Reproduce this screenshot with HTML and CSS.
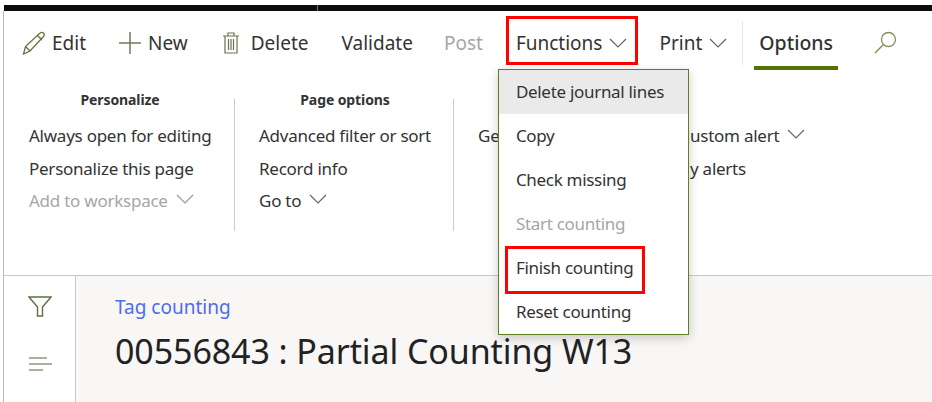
FILE: index.html
```html
<!DOCTYPE html>
<html lang="en">
<head>
    <meta charset="UTF-8">
    <title>Tag counting</title>
    <link rel="stylesheet" href="styles.css">
</head>
<body>
    <div class="topbar"><span class="seg-a"></span><span class="seg-b"></span></div>

    <div class="toolbar">
        <div class="tool">
            <svg class="icon" width="24" height="24" viewBox="0 0 24 24"><path d="M1.500 23l2-7.500L17.500 2.500c1.500-1.500 3-1.500 4-.5s1 2.500-.5 4L8 20zM3.500 15.500l4.500 4.500M15.500 4.500l4.500 4.500" fill="none" stroke="#6b7040" stroke-width="1.300"/></svg>
            Edit
        </div>
        <div class="tool new">
            <svg class="icon" width="24" height="24" viewBox="0 0 24 24"><path d="M12 1v22M1 12h22" fill="none" stroke="#77775a" stroke-width="1.500"/></svg>
            New
        </div>
        <div class="tool">
            <svg class="icon trash" width="18" height="24" viewBox="0 0 18 24"><path d="M1 5h16M6 5V2h6v3M3 5v17h12V5M6.500 8v11M9 8v11M11.500 8v11" fill="none" stroke="#6b7050" stroke-width="1.200"/></svg>
            Delete
        </div>
        <div class="tool">Validate</div>
        <div class="tool off post">Post</div>
        <div class="tool functions">
            Functions
            <svg class="chev" width="18" height="10" viewBox="0 0 18 10"><path d="M1 1l8 8 8-8" fill="none" stroke="#666" stroke-width="1.200"/></svg>
            <div class="menu">
                <div class="menu-item hover">Delete journal lines</div>
                <div class="menu-item">Copy</div>
                <div class="menu-item">Check missing</div>
                <div class="menu-item off">Start counting</div>
                <div class="menu-item"><span class="marked">Finish counting</span></div>
                <div class="menu-item">Reset counting</div>
            </div>
        </div>
        <div class="tool print">
            Print
            <svg class="chev" width="18" height="10" viewBox="0 0 18 10"><path d="M1 1l8 8 8-8" fill="none" stroke="#666" stroke-width="1.200"/></svg>
        </div>
        <div class="tool-sep"></div>
        <div class="tab">Options</div>
        <svg class="search" width="23" height="23" viewBox="0 0 23 23"><circle cx="14.500" cy="8.500" r="7" fill="none" stroke="#8a8a60" stroke-width="1.300"/><path d="M9.500 13.500L1 22" fill="none" stroke="#8a8a50" stroke-width="1.500"/></svg>
    </div>

    <div class="ribbon">
        <div class="group g1">
            <div class="group-head">Personalize</div>
            <div class="link">Always open for editing</div>
            <div class="link">Personalize this page</div>
            <div class="link off">Add to workspace <svg class="chev" width="18" height="10" viewBox="0 0 18 10"><path d="M1 1l8 8 8-8" fill="none" stroke="#999" stroke-width="1.200"/></svg></div>
        </div>
        <div class="group-sep"></div>
        <div class="group g2">
            <div class="group-head">Page options</div>
            <div class="link">Advanced filter or sort</div>
            <div class="link">Record info</div>
            <div class="link">Go to <svg class="chev" width="18" height="10" viewBox="0 0 18 10"><path d="M1 1l8 8 8-8" fill="none" stroke="#666" stroke-width="1.200"/></svg></div>
        </div>
        <div class="group-sep"></div>
        <div class="group g3">
            <div class="group-head">&nbsp;</div>
            <div class="link">Ge</div>
        </div>
        <div class="group g4">
            <div class="group-head">&nbsp;</div>
            <div class="link">ustom alert <svg class="chev" width="18" height="10" viewBox="0 0 18 10"><path d="M1 1l8 8 8-8" fill="none" stroke="#666" stroke-width="1.200"/></svg></div>
            <div class="link">y alerts</div>
        </div>
    </div>

    <div class="lower">
        <div class="rail">
            <svg width="24" height="22" viewBox="0 0 24 22"><path d="M1 1h22l-8.500 10v9h-5v-9z" fill="none" stroke="#5f7040" stroke-width="1.400"/></svg>
            <svg width="24" height="16" viewBox="0 0 24 16"><path d="M1 2h18M1 8h23M1 14h14" fill="none" stroke="#8f9a80" stroke-width="1.500"/></svg>
        </div>
        <div class="content">
            <div class="crumb">Tag counting</div>
            <h1>00556843 : Partial Counting W13</h1>
        </div>
    </div>
</body>
</html>
```

FILE: styles.css
```css
* {
    box-sizing: border-box;
}
html, body {
    height: 100%;
}
body {
    margin: 0;
    padding-top: 5px;
    background: #fff;
    color: #333;
    font-family: "Noto Sans", "Open Sans", sans-serif;
    overflow: hidden;
    display: flex;
    flex-direction: column;
}
.off {
    color: #a6a6a6;
}

.topbar {
    display: flex;
    height: 6px;
    margin-left: 4px;
    gap: 1px;
    background: #777;
}
.seg-a {
    width: 313px;
    background: #0c0c0c;
}
.seg-b {
    flex: 1;
    background: #0c0c0c;
}

.toolbar {
    display: flex;
    align-items: center;
    gap: 33px;
    height: 59px;
    padding: 4px 0 0 18px;
    border-left: 1px solid #bbb;
    margin-left: 3px;
    font-size: 19px;
}
.tool {
    display: flex;
    align-items: center;
    position: relative;
}
.new {
    margin: 0 1px 0 -1px;
}
.post {
    margin-left: -2px;
}
.print {
    margin-left: -1px;
}
.icon {
    margin-right: 6px;
}
.trash {
    margin-right: 11px;
}
.tool .chev {
    margin-left: 7px;
    vertical-align: baseline;
}
.chev {
    margin-left: 4px;
    vertical-align: 3px;
}
.functions::after {
    content: "";
    position: absolute;
    left: -10px;
    right: -11px;
    top: -14px;
    bottom: -9px;
    border: 3px solid #f00;
}
.tool-sep {
    width: 1px;
    height: 44px;
    margin: 0 -17px 0 -18px;
    background: #e6e6e6;
}
.tab {
    padding-bottom: 7px;
    position: relative;
    top: 3px;
    font-weight: 500;
    font-size: 19.5px;
}
.tab::after {
    content: "";
    position: absolute;
    left: -5px;
    right: -5px;
    bottom: -7px;
    height: 4px;
    background: #547400;
}
.search {
    margin-left: 8px;
}

.menu {
    position: absolute;
    left: -18px;
    top: 39px;
    width: 191px;
    background: #fff;
    border: 1px solid #5f7f1a;
    box-shadow: 0 3px 10px rgba(0,0,0,0.2);
    font-size: 17px;
    letter-spacing: -0.3px;
    z-index: 2;
}
.menu-item {
    height: 44px;
    line-height: 44px;
    padding-left: 17px;
}
.hover {
    background: #eaeaea;
}
.marked {
    position: relative;
    display: inline-block;
    height: 44px;
}
.marked::after {
    content: "";
    position: absolute;
    left: -11px;
    right: -11px;
    top: 0;
    height: 42px;
    border: 3px solid #f00;
}

.ribbon {
    display: flex;
    align-items: flex-start;
    height: 206px;
    margin-left: 3px;
    padding-top: 20px;
    border-left: 1px solid #bbb;
    border-bottom: 1px solid #c8c8c8;
    font-size: 17px;
    letter-spacing: -0.25px;
}
.group {
    padding: 0 22px 0 24px;
}
.group-sep {
    width: 1px;
    height: 132px;
    margin-top: 9px;
    background: #ccc;
}
.g1 {
    width: 230px;
    padding: 0 23px 0 25px;
}
.g2 {
    width: 218px;
}
.g3 {
    width: 236px;
}
.g4 {
    padding: 0;
}
.group-head {
    height: 20px;
    line-height: 20px;
    margin-bottom: 10px;
    text-align: center;
    font-size: 14px;
    font-weight: 700;
    letter-spacing: -0.1px;
}
.link {
    height: 32.5px;
    line-height: 32.5px;
    white-space: nowrap;
}

.lower {
    flex: 1;
    display: flex;
    margin-left: 3px;
    border-left: 1px solid #bbb;
}
.rail {
    width: 72px;
    padding-top: 20px;
    display: flex;
    flex-direction: column;
    align-items: center;
    gap: 38px;
    border-right: 1px solid #c8c8c8;
}
.content {
    flex: 1;
    padding: 17px 0 0 39px;
    background: #f8f7f6;
}
.crumb {
    font-size: 19px;
    line-height: 28px;
    color: #4f6bed;
}
h1 {
    margin: 8px 0 0;
    font-size: 34px;
    line-height: 44px;
    font-weight: 400;
    letter-spacing: -0.1px;
    color: #222;
}
```
